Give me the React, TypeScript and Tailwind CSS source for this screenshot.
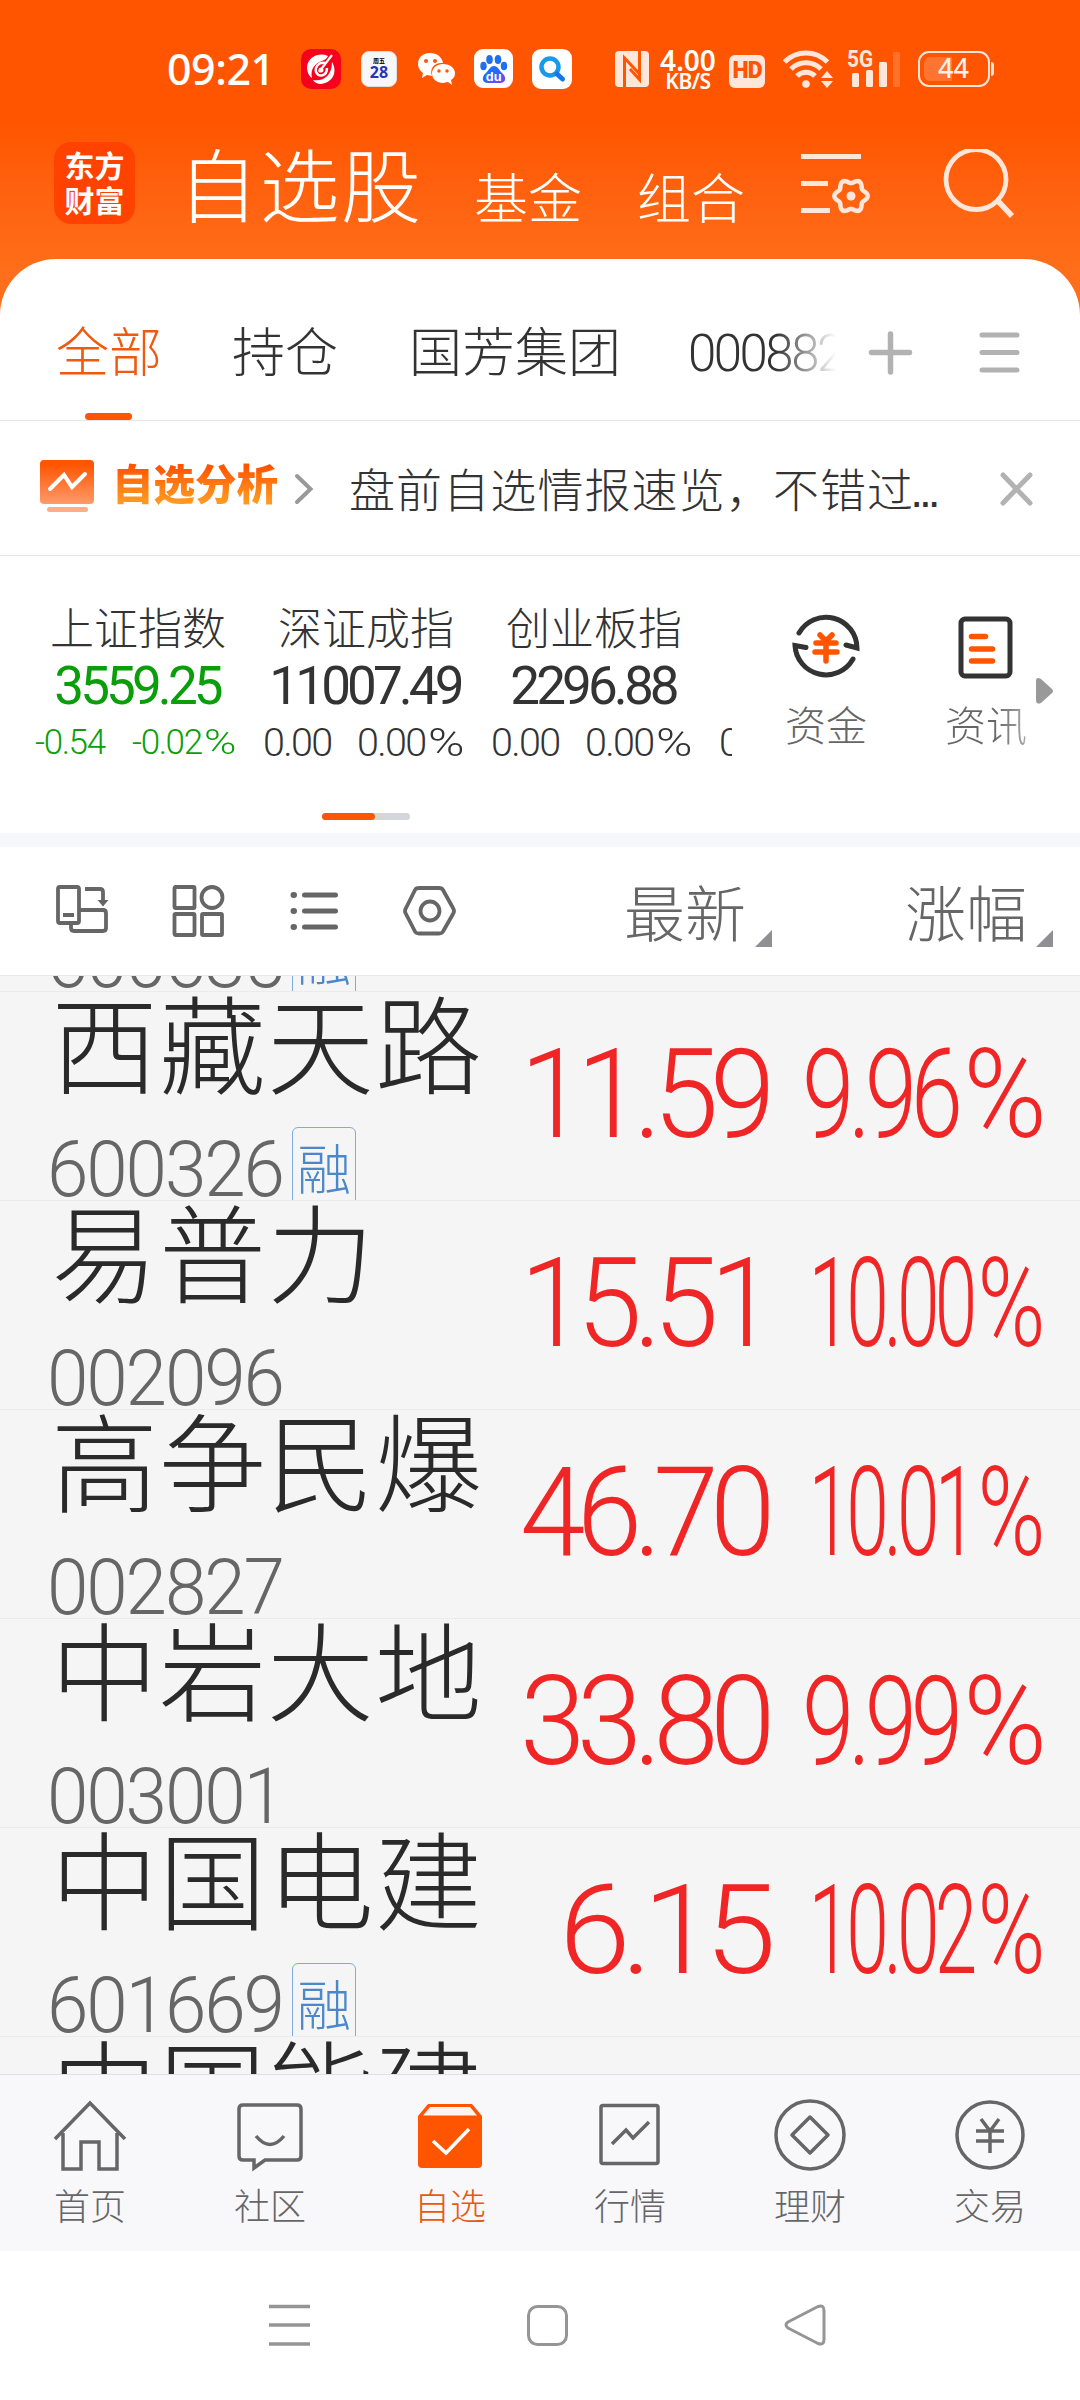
import React from "react";

interface Stock {
  name: string;
  code: string;
  price: string;
  change: string;
  margin?: boolean;
}

const stocks: Stock[] = [
  { name: "西藏天路", code: "600326", price: "11.59", change: "9.96", margin: true },
  { name: "易普力", code: "002096", price: "15.51", change: "10.00" },
  { name: "高争民爆", code: "002827", price: "46.70", change: "10.01" },
  { name: "中岩大地", code: "003001", price: "33.80", change: "9.99" },
  { name: "中国电建", code: "601669", price: "6.15", change: "10.02", margin: true },
];

const indices = [
  { name: "上证指数", value: "3559.25", diff: "-0.54", pct: "-0.02", down: true },
  { name: "深证成指", value: "11007.49", diff: "0.00", pct: "0.00" },
  { name: "创业板指", value: "2296.88", diff: "0.00", pct: "0.00" },
];

const StatusBar = () => (
  <div className="flex h-[138px] items-center pl-[167px] text-white">
    <span className="mb-[2px] w-[134px] font-['Noto_Sans'] text-[43px] leading-none font-medium tracking-[-0.5px]">
      09:21
    </span>
    <div className="flex items-center">
      <svg width="40" height="40" viewBox="0 0 40 40" className="mr-5">
        <rect width="40" height="40" rx="10" fill="#f8001d" />
        <path d="M27 7C18 3 7 8 6 18c0 5 2 9 5 11-2-9 3-15 10-17 3-1 5-3 6-5z" fill="#fff" />
        <path d="M31 13c5 8 3 20-11 22-4 0-7-2-8-4 12 2 19-6 19-18z" fill="#fff" />
        <path d="M24 14c-7-1-10 4-9 9 3 6 11 4 11-4" fill="none" stroke="#fff" strokeWidth="2.500" />
        <path d="M18 23 31 6" stroke="#fff" strokeWidth="2.200" />
        <circle cx="20" cy="21" r="2.500" fill="#fff" />
      </svg>
      <div className="mr-[20px] flex h-9 w-9 flex-col items-center rounded-lg border border-[#ddd] bg-[#f7f7f8] pt-[5px]">
        <span className="font-['Noto_Sans_CJK_SC'] text-[6px] leading-[7px] font-bold text-black">周五</span>
        <span className="font-['Noto_Sans'] text-[16px] leading-[17px] font-bold text-[#2733b8]">28</span>
      </div>
      <svg width="39" height="34" viewBox="0 0 39 34" className="mr-[18px]">
        <path d="M13 1C5 1 1 6 1 12c0 4 2 7 5 9l-1 5 5-3 5 1c-3-8 3-14 11-13C25 5 20 1 13 1z" fill="#fff" />
        <path d="M26 12c-6 0-11 4-11 9.500S20 31 26 31l5-1 4 3-1-5c3-2 4-4 4-7 0-5-5-9-12-9z" fill="#fff" />
        <g fill="#ff5500">
          <circle cx="9" cy="9" r="2" />
          <circle cx="18" cy="9" r="2" />
          <circle cx="22" cy="19" r="1.700" />
          <circle cx="30" cy="19" r="1.700" />
        </g>
      </svg>
      <svg width="40" height="40" viewBox="0 0 40 40" className="mr-[18px]">
        <defs>
          <linearGradient id="paw" x1="0" y1="0" x2="1" y2="1">
            <stop offset=".4" stopColor="#1f6ff0" />
            <stop offset="1" stopColor="#8a3ff0" />
          </linearGradient>
        </defs>
        <rect width="39" height="39" rx="9" fill="#fff" />
        <g fill="#1f6ff0">
          <ellipse cx="9.500" cy="17" rx="3.200" ry="4.300" />
          <ellipse cx="15.500" cy="10.500" rx="3.300" ry="4.500" />
          <ellipse cx="24" cy="10.500" rx="3.300" ry="4.500" />
          <ellipse cx="30" cy="17" rx="3.200" ry="4.300" />
        </g>
        <path d="M20 17c-4 0-5 4-8 7-5 4-4 10 2 10h12c6 0 7-6 2-10-3-3-4-7-8-7z" fill="url(#paw)" />
        <text x="19.800" y="31.500" fill="#fff" fontSize="13" fontWeight="700" textAnchor="middle" fontFamily="Liberation Sans">
          du
        </text>
      </svg>
      <svg width="40" height="40" viewBox="0 0 40 40">
        <rect width="40" height="40" rx="9" fill="#fff" />
        <circle cx="18" cy="18" r="8.500" fill="none" stroke="#1899ec" strokeWidth="4.500" />
        <path d="m25 25 5.500 5" stroke="#1677ea" strokeWidth="5" strokeLinecap="round" />
      </svg>
    </div>
    <svg width="34" height="36" viewBox="0 0 34 36" className="ml-[43px]">
      <rect width="34" height="36" rx="4" fill="#ffe6da" />
      <path d="M9.500 36V7l16 17" fill="none" stroke="#ff5500" strokeWidth="3" />
      <path d="M24.500 0v28.500L15 18" fill="none" stroke="#ff5500" strokeWidth="3" />
    </svg>
    <div className="ml-[8px] flex w-[62px] flex-col items-center pt-[2px] font-['Noto_Sans'] font-semibold">
      <span className="text-[28px] leading-[23px]">4.00</span>
      <span className="text-[21px] leading-[19px] tracking-[-0.5px]">KB/S</span>
    </div>
    <div className="mt-1 ml-[10px] flex h-[33px] w-[36px] items-center justify-center rounded-md bg-[#ffe6da] font-['Roboto'] text-[23px] font-black tracking-[-1px] text-[#ff5500]">
      HD
    </div>
    <svg width="50" height="40" viewBox="0 0 50 40" className="ml-[18px]">
      <g fill="none" stroke="#ffe6da" strokeWidth="5">
        <path d="M1.500 13a30 30 0 0 1 43 0" />
        <path d="M8 20a21 21 0 0 1 30 0" />
        <path d="M14 27a12.500 12.500 0 0 1 18 0" />
      </g>
      <circle cx="23" cy="35" r="3.800" fill="#ffe6da" />
      <path d="m38 29 6-7 6 7zM38 32l6 7 6-7z" fill="#ffe6da" />
    </svg>
    <svg width="56" height="40" viewBox="0 0 56 40" className="ml-[14px]">
      <text x="0" y="17.500" fill="#ffe6da" fontSize="23" fontWeight="700" fontFamily="Roboto" textLength="26" lengthAdjust="spacingAndGlyphs">
        5G
      </text>
      <g fill="#ffe6da">
        <rect x="5" y="24" width="7" height="14" rx="1.500" />
        <rect x="19" y="21" width="7" height="17" rx="1.500" />
        <rect x="32" y="13" width="8" height="25" rx="1.500" />
        <rect x="46" y="3" width="7" height="35" rx="1.500" opacity=".2" />
      </g>
    </svg>
    <div className="ml-[15px] flex items-center gap-px">
      <div className="flex h-[36px] w-[72px] rounded-[11px] border-[2.500px] border-[#ffe6da] p-[4px]">
        <div className="relative h-full w-[28px] rounded-l-md bg-[#ff7430]">
          <span className="absolute top-[-4px] left-[14px] font-['Noto_Sans'] text-[27px] leading-[30px] font-medium text-[#fff0e8]">
            44
          </span>
        </div>
      </div>
      <div className="h-3.5 w-[3px] rounded-r bg-[#ffe6da]" />
    </div>
  </div>
);

// six rounded teeth around the centre
const gearPoints = Array.from({ length: 72 }, (_, i) => {
  const a = (i * 5 * Math.PI) / 180;
  const r = 14.8 + 1.9 * Math.cos(6 * a);
  return `${(50 + r * Math.cos(a)).toFixed(2)},${(49 + r * Math.sin(a)).toFixed(2)}`;
}).join(" ");

const Header = () => (
  <div className="flex h-[121px] text-white">
    <div className="mt-[4px] ml-[54px] flex h-[82px] w-[81px] flex-col items-center justify-center rounded-[17px] bg-[#ff4200] pb-[2px] text-[30px] leading-[35px] font-bold">
      <span>东方</span>
      <span>财富</span>
    </div>
    <h1 className="mt-[3px] ml-[43px] w-[296px] text-[80px] leading-[80px] font-light tracking-[1.500px]">自选股</h1>
    <span className="mt-[31px] w-[163px] text-[54px] leading-[54px] font-light">基金</span>
    <span className="mt-[31px] w-[164px] text-[54px] leading-[54px] font-light">组合</span>
    <svg width="72" height="70" viewBox="0 0 72 70" className="mt-[9px]" fill="none" stroke="#ffe6da" strokeWidth="5">
      <path d="M0 9.500h60M0 36.500h27M0 63.500h29" />
      <polygon points={gearPoints} strokeWidth="4.500" />
      <circle cx="50" cy="49" r="4.500" fill="#ffe6da" stroke="none" />
    </svg>
    <svg width="72" height="74" viewBox="0 0 72 74" className="mt-[11px] ml-[70px]" fill="none" stroke="#ffe6da" strokeWidth="4.800">
      <circle cx="33" cy="30.500" r="30" />
      <path d="m54 51 15 16" strokeWidth="5.500" />
    </svg>
  </div>
);

const Tabs = () => (
  <div className="flex h-[162px] border-b border-[#e6e6e6] pt-[62px] pl-[56px] text-[53px] leading-[56px] font-light text-[#333]">
    <div className="flex w-[176px] flex-col text-[#f05a10]">
      <span>全部</span>
      <span className="mt-[36px] ml-[29px] h-[7px] w-[47px] rounded-full bg-[#ff5500]" />
    </div>
    <span className="w-[177px]">持仓</span>
    <span className="w-[277px]">国芳集团</span>
    <div className="w-[150px] overflow-hidden [mask-image:linear-gradient(to_right,black_60%,transparent)]">
      <span className="relative -top-px pl-[2px] font-['Roboto'] text-[51px] tracking-[-2.500px]">000882</span>
    </div>
    <svg width="46" height="46" viewBox="0 0 46 46" className="mt-[9px] ml-[32px]" stroke="#b2b2b2" strokeWidth="5.500" strokeLinecap="round">
      <path d="M3.500 22.500h38M22.500 4v38" />
    </svg>
    <svg width="42" height="46" viewBox="0 0 42 46" className="mt-[9px] ml-[65px]" stroke="#b2b2b2" strokeWidth="5" strokeLinecap="round">
      <path d="M3 5h35M3 22.500h35M3 40h35" />
    </svg>
  </div>
);

const Notice = () => (
  <div className="flex h-[135px] items-center border-b border-[#e6e6e6] pl-[40px] font-light">
    <svg width="54" height="54" viewBox="0 0 54 54" className="mb-[2px]">
      <defs>
        <linearGradient id="board" x1="0" y1="0" x2="0" y2="1">
          <stop offset=".1" stopColor="#ff5500" />
          <stop offset="1" stopColor="#ff9a6b" />
        </linearGradient>
      </defs>
      <rect y="0" width="54" height="44" rx="4" fill="url(#board)" />
      <path d="M10 29 24 15l8 12 13-13" fill="none" stroke="#fff" strokeWidth="4" strokeLinecap="round" />
      <rect x="7" y="47" width="41" height="5" rx="2.500" fill="#ffad87" />
    </svg>
    <span className="mb-[12px] ml-[18px] w-[170px] bg-gradient-to-b from-[#ff5500] from-20% to-[#ff9820] to-90% bg-clip-text text-[41.500px] leading-[48px] font-black whitespace-nowrap text-transparent">
      自选分析
    </span>
    <svg width="20" height="34" viewBox="0 0 20 34" className="mt-[1px] ml-[12px]" fill="none" stroke="#999" strokeWidth="4" strokeLinecap="round">
      <path d="m3 4 13.500 13L3 30" />
    </svg>
    <span className="mt-px ml-[35px] w-[644px] text-[46px] leading-[56px] tracking-[1.100px] whitespace-nowrap text-[#333]">
      盘前自选情报速览，不错过
      <span className="-ml-[4px] font-['Liberation_Sans'] tracking-[-4px]">...</span>
    </span>
    <svg width="38" height="38" viewBox="0 0 38 38" className="mt-[3px] ml-[5px]" stroke="#b2b2b2" strokeWidth="5" strokeLinecap="round">
      <path d="m5 4 27 28M32 4 5 32" />
    </svg>
  </div>
);

const IndexPanel = () => (
  <div className="flex h-[277px] flex-col">
    <div className="flex h-[257px]">
      <div className="flex w-[732px] overflow-hidden pl-[24px]">
        {indices.map((item) => (
          <div
            key={item.name}
            className={`flex w-[228px] shrink-0 flex-col items-center pt-[46px] ${
              item.down ? "text-[#0a9f0a]" : "text-[#333]"
            }`}
          >
            <span className="text-[44px] leading-[48px] font-light text-[#333]">{item.name}</span>
            <span className="mt-[10px] -ml-[2px] font-['Roboto'] text-[53px] leading-[52px] tracking-[-3.900px]">
              {item.value}
            </span>
            <div
              className={`mt-[9px] flex self-stretch font-['Roboto'] leading-[44px] font-light whitespace-nowrap ${
                item.down ? "pl-[11px] text-[35px] tracking-[-1.400px]" : "pl-[11px] text-[39.500px] tracking-[-1.700px]"
              }`}
            >
              <span className={item.down ? "w-[97px]" : "w-[94px]"}>{item.diff}</span>
              <span>
                {item.pct}
                <span className="ml-[0.250em] inline-block origin-right scale-x-[1.250]">%</span>
              </span>
            </div>
          </div>
        ))}
        <div className="flex w-[228px] shrink-0 flex-col pt-[165px] pl-[11px] font-['Roboto'] text-[39.500px] leading-[44px] font-light text-[#333]">
          0.00
        </div>
      </div>
      <div className="flex w-[188px] flex-col items-center pt-[57px]">
        <svg width="70" height="70" viewBox="0 0 70 70" fill="none" stroke="#333" strokeWidth="5" strokeLinecap="round">
          <path d="M8 20a31 31 0 0 1 58 15l-11-3" />
          <path d="M62 46A31 31 0 0 1 4 32.500l11 2" />
          <g stroke="#ff5500" strokeWidth="5.500">
            <path d="m29 22 6 6 6-6M25 30h20M24 39h22M35 28v20" />
          </g>
        </svg>
        <span className="mt-[17px] text-[41px] leading-[46px] font-light text-[#666]">资金</span>
      </div>
      <div className="flex w-[132px] flex-col items-center pt-[57px]">
        <svg width="60" height="70" viewBox="0 0 60 70" fill="none" stroke="#333" strokeWidth="5">
          <rect x="5" y="6" width="49" height="57" rx="4" />
          <path d="M15.500 23.500h14M15.500 36h21M15.500 48h21" stroke="#ff5500" strokeWidth="5.500" strokeLinecap="round" />
        </svg>
        <span className="mt-[17px] bg-gradient-to-r from-[#666] from-60% to-[#aaa] bg-clip-text text-[41px] leading-[46px] font-light text-transparent">
          资讯
        </span>
      </div>
      <svg width="18" height="28" viewBox="0 0 18 28" className="mt-[121px] -ml-[16px]">
        <path d="M0 4q0-5 5-2l11 10q2 2 0 4L5 26q-5 2-5-3z" fill="#999" />
      </svg>
    </div>
    <div className="ml-[322px] h-[7px] w-[88px] rounded-full bg-[#d3d6da]">
      <div className="h-full w-[53px] rounded-full bg-[#f9560a]" />
    </div>
  </div>
);

const SortArrow = () => (
  <svg width="17" height="17" viewBox="0 0 17 17" className="mt-[83px]">
    <path d="M17 0v17H0z" fill="#8f8f94" />
  </svg>
);

const Toolbar = () => (
  <div className="flex h-[129px] border-b border-[#e8e8e8] pl-[54px] text-[61px] leading-[64px] font-light text-[#666]">
    <div className="flex w-[570px] gap-[61px] pt-[38px]">
      <svg width="55" height="54" viewBox="0 0 55 54" fill="none" stroke="#666" strokeWidth="3.800">
        <rect x="4" y="2" width="21" height="36" rx="2" />
        <path d="M9 30h11M31 4h15q3 0 3 3v10" />
        <path d="M43.500 15h11L49 21.500z" fill="#666" stroke="none" />
        <path d="M26 25h23q3 0 3 3v15q0 3-3 3H20q-3 0-3-3v-5" />
      </svg>
      <svg width="55" height="54" viewBox="0 0 55 54" fill="none" stroke="#666" strokeWidth="3.800">
        <rect x="4.500" y="2" width="20" height="21" rx="1" />
        <circle cx="42" cy="12.500" r="10.500" />
        <rect x="4.500" y="29" width="20" height="21" rx="1" />
        <rect x="32" y="29" width="20" height="21" rx="1" />
      </svg>
      <svg width="55" height="54" viewBox="0 0 55 54" stroke="#666" strokeWidth="5" strokeLinecap="round">
        <path d="M18.500 10h31M18.500 26h31M18.500 42h31" />
        <path d="M7.500 10h.5M7.500 26h.5M7.500 42h.5" strokeWidth="6" />
      </svg>
      <svg width="55" height="54" viewBox="0 0 55 54" fill="none" stroke="#666" strokeWidth="3.800" strokeLinejoin="round">
        <path d="M17 3h20q3 0 4 2l10 18q2 3 0 6L41 46.500q-1 2-4 2H17q-3 0-4-2L4 29q-2-3 0-6l9-18q1-2 4-2z" />
        <circle cx="28" cy="26" r="9.500" />
      </svg>
    </div>
    <span className="w-[131px] pt-[32px]">最新</span>
    <SortArrow />
    <span className="ml-[133px] w-[131px] pt-[32px]">涨幅</span>
    <SortArrow />
  </div>
);

const CodeLine: React.FC<{ code: string; margin?: boolean }> = ({ code, margin }) => (
  <div className="flex h-[81px] shrink-0 items-start">
    <span className="mt-[6px] -ml-[4px] w-[245px] font-['Roboto'] text-[77px] leading-[90px] whitespace-nowrap text-[#666]">
      <span className="inline-block origin-left scale-x-[0.970] tracking-[-2.200px]">{code}</span>
    </span>
    {margin && (
      <span className="mt-[8px] flex h-[84px] w-[64px] shrink-0 items-start justify-center rounded-[6px] border border-[#7fabdd] pt-[11px] text-[54px] leading-[56px] text-[#4a87cb]">
        融
      </span>
    )}
  </div>
);

const StockRow: React.FC<{ stock: Stock }> = ({ stock }) => (
  <div className="flex h-[209px] shrink-0 overflow-hidden border-b border-[#ebebeb] font-light">
    <div className="flex w-[490px] flex-col pl-[51px]">
      <span className="-mt-[7px] h-[134px] shrink-0 text-[107px] leading-[109px] tracking-[1px] whitespace-nowrap text-[#2a2a2a]">
        {stock.name}
      </span>
      <CodeLine code={stock.code} margin={stock.margin} />
    </div>
    <div className="flex w-[277px] justify-end pt-[30px]">
      <span
        className={`origin-right font-['Roboto'] text-[124px] leading-[146px] tracking-[-9px] text-[#f02525] ${
          stock.price.length > 4 ? "scale-x-[0.950]" : "scale-x-[1.040]"
        }`}
      >
        {stock.price}
      </span>
    </div>
    <div className="flex w-[272px] justify-end pt-[30px]">
      {stock.change && (
        <span
          className={`shrink-0 origin-right font-['Roboto'] text-[124px] leading-[146px] tracking-[-8px] whitespace-nowrap text-[#f02525] ${
            stock.change.length > 4 ? "scale-x-[0.618]" : "scale-x-[0.760]"
          }`}
        >
          {stock.change}
          <span className="ml-[0.200em] inline-block origin-right scale-x-[1.200]">%</span>
        </span>
      )}
    </div>
  </div>
);

const StockList = () => (
  <div className="flex h-[1098px] flex-col overflow-hidden bg-[#f5f5f5]">
    <div className="flex h-[16px] shrink-0 flex-col justify-end overflow-hidden border-b border-[#ebebeb] pl-[51px] font-light">
      <CodeLine code="600635" margin />
    </div>
    {stocks.map((stock) => (
      <StockRow key={stock.code} stock={stock} />
    ))}
    <StockRow stock={{ name: "中国能建", code: "601868", price: "", change: "" }} />
  </div>
);

const navItems = [
  {
    label: "首页",
    icon: <path d="M1 39 36 3l35 36M9 33v36h18V42h18v27h18V33" />,
  },
  {
    label: "社区",
    icon: (
      <>
        <path d="M9 5h54q4 0 4 4v47q0 4-4 4H31l-11 8v-8H9q-4 0-4-4V9q0-4 4-4z" />
        <path d="M22 36q14 17 28 0" />
      </>
    ),
  },
  {
    label: "自选",
    active: true,
    icon: (
      <>
        <path d="M4 16 14 4h44l10 12v48q0 4-4 4H8q-4 0-4-4z" fill="#ff5500" stroke="none" />
        <path d="M9 15.500 16 7h40l7 8.500z" fill="#fff4ee" stroke="none" />
        <path d="m19 41 13 12 23-24" stroke="#fff" strokeWidth="3.500" />
      </>
    ),
  },
  {
    label: "行情",
    icon: (
      <>
        <rect x="7" y="5.500" width="57" height="58" rx="2" />
        <path d="m18 44 14-14 7 8 16-16" />
      </>
    ),
  },
  {
    label: "理财",
    icon: (
      <>
        <circle cx="36" cy="35" r="34" />
        <path d="M36 17 54 35 36 53 18 35z" strokeLinejoin="round" />
      </>
    ),
  },
  {
    label: "交易",
    icon: (
      <>
        <circle cx="36" cy="35" r="33" />
        <path d="m27 19 9 12 9-12M22 31h28M22 41h28M36 31v22" />
      </>
    ),
  },
];

const BottomNav = () => (
  <div className="grid h-[177px] grid-cols-6 border-t border-[#dfe0e2] bg-[#f8f8fb]">
    {navItems.map((item) => (
      <div key={item.label} className="flex flex-col items-center pt-[25px]">
        <svg width="72" height="72" viewBox="0 0 72 72" fill="none" stroke="#666" strokeWidth="3.500" className="overflow-visible">
          {item.icon}
        </svg>
        <span className={`mt-[12px] text-[36px] leading-[40px] font-light ${item.active ? "text-[#e8590f]" : "text-[#666]"}`}>
          {item.label}
        </span>
      </div>
    ))}
  </div>
);

const SystemBar = () => (
  <div className="flex h-[149px] items-start bg-white pt-[53px] pl-[269px]">
    <svg width="41" height="42" viewBox="0 0 41 42" stroke="#959595" strokeWidth="3.500">
      <path d="M0 2.500h41M0 21h41M0 40h41" />
    </svg>
    <svg width="42" height="42" viewBox="0 0 42 42" className="ml-[216px]" fill="none" stroke="#959595" strokeWidth="3">
      <rect x="2.500" y="2.500" width="38" height="38" rx="9" />
    </svg>
    <svg width="42" height="42" viewBox="0 0 42 42" className="ml-[216px]" fill="none" stroke="#959595" strokeWidth="3" strokeLinejoin="round">
      <path d="M34 2.500q6-2 6 4v29q0 6-6 4L4 24q-4-3 0-6z" />
    </svg>
  </div>
);

export default function App() {
  return (
    <div className="flex h-[2400px] w-[1080px] flex-col overflow-hidden bg-white font-['Noto_Sans_CJK_SC',sans-serif]">
      <div className="flex h-[320px] shrink-0 flex-col bg-gradient-to-b from-[#ff5500] from-38% to-[#ff6e1a] to-85%">
        <StatusBar />
        <Header />
      </div>
      <div className="-mt-[61px] flex flex-col rounded-t-[56px] bg-white">
        <Tabs />
        <Notice />
        <IndexPanel />
      </div>
      <div className="h-[14px] shrink-0 bg-[#f6f7fa]" />
      <Toolbar />
      <StockList />
      <BottomNav />
      <SystemBar />
    </div>
  );
}
